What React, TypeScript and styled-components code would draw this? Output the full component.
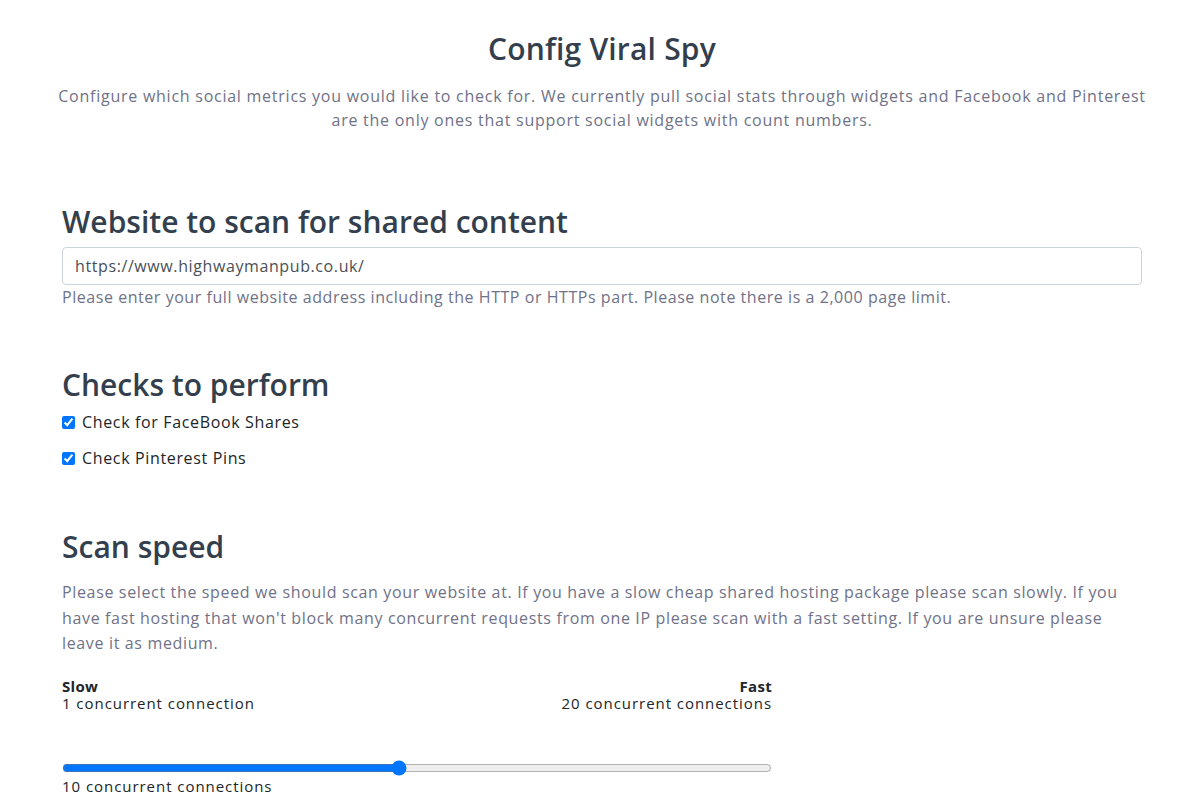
import React, { useState } from 'react';
import styled, { createGlobalStyle } from 'styled-components';

const GlobalStyle = createGlobalStyle`
  body {
    margin: 0;
    background: #ffffff;
    font-family: "Open Sans", "Liberation Sans", sans-serif;
    color: #212529;
  }
`;

const Page = styled.div`
  padding: 32px 47px 0 62px;
`;

const Header = styled.header`
  margin: 0 -15px;
  text-align: center;
`;

const Title = styled.h1`
  margin: 0;
  font-size: 30px;
  line-height: 34px;
  font-weight: 600;
  letter-spacing: 0.2px;
  color: #343f4e;
`;

const Lead = styled.p`
  margin: 18px 0 0;
  font-size: 16px;
  line-height: 24px;
  letter-spacing: 0.75px;
  color: #6f7288;
`;

const Section = styled.section<{ $gap: number }>`
  margin-top: ${(p) => p.$gap}px;
`;

const Heading = styled.h2`
  margin: 0;
  font-size: 30px;
  line-height: 36px;
  font-weight: 600;
  color: #343f4e;
`;

const UrlInput = styled.input`
  display: block;
  box-sizing: border-box;
  width: 100%;
  height: 38px;
  margin-top: 7px;
  padding: 0 12px;
  border: 1px solid #ced4da;
  border-radius: 4px;
  font-family: inherit;
  font-size: 16px;
  letter-spacing: 0.6px;
  color: #495057;
  outline: none;
`;

const Help = styled.p`
  margin: 0;
  font-size: 16px;
  line-height: 24px;
  letter-spacing: 0.55px;
  color: #6f7288;
`;

const CheckList = styled.div`
  display: flex;
  flex-direction: column;
  gap: 12px;
  margin-top: 7px;
`;

const CheckRow = styled.label`
  display: flex;
  align-items: center;
  gap: 7px;
  height: 24px;
  font-size: 16px;
  letter-spacing: 0.65px;
  color: #212529;
`;

const CheckBox = styled.input`
  width: 13px;
  height: 13px;
  margin: 0;
`;

const Para = styled.p`
  margin: 15px 0 0;
  font-size: 16px;
  line-height: 25.5px;
  letter-spacing: 0.65px;
  color: #6f7288;
`;

const Speed = styled.div`
  width: 710px;
  margin-top: 21px;
`;

const Ends = styled.div`
  display: flex;
  justify-content: space-between;
  font-size: 15px;
  line-height: 17px;
  letter-spacing: 0.95px;
  color: #212529;
`;

const End = styled.div<{ $right?: boolean }>`
  text-align: ${(p) => (p.$right ? 'right' : 'left')};

  strong {
    display: block;
    font-weight: 700;
    letter-spacing: 0.3px;
  }
`;

const Range = styled.input`
  display: block;
  width: 710px;
  height: 16px;
  margin: 48px 0 0;
`;

const Current = styled.div`
  margin-top: 2px;
  font-size: 15px;
  line-height: 16px;
  letter-spacing: 0.95px;
  color: #212529;
`;

export default function App() {
  const [url, setUrl] = useState('https://www.highwaymanpub.co.uk/');
  const [fb, setFb] = useState(true);
  const [pins, setPins] = useState(true);
  const [speed, setSpeed] = useState(10);

  return (
    <Page>
      <GlobalStyle />
      <Header>
        <Title>Config Viral Spy</Title>
        <Lead>
          Configure which social metrics you would like to check for. We currently pull social stats through widgets and
          Facebook and Pinterest are the only ones that support social widgets with count numbers.
        </Lead>
      </Header>

      <Section $gap={72}>
        <Heading>Website to scan for shared content</Heading>
        <UrlInput value={url} onChange={(e) => setUrl(e.target.value)} />
        <Help>
          Please enter your full website address including the HTTP or HTTPs part. Please note there is a 2,000 page limit.
        </Help>
      </Section>

      <Section $gap={58}>
        <Heading>Checks to perform</Heading>
        <CheckList>
          <CheckRow>
            <CheckBox type="checkbox" checked={fb} onChange={() => setFb(!fb)} />
            Check for FaceBook Shares
          </CheckRow>
          <CheckRow>
            <CheckBox type="checkbox" checked={pins} onChange={() => setPins(!pins)} />
            Check Pinterest Pins
          </CheckRow>
        </CheckList>
      </Section>

      <Section $gap={59}>
        <Heading>Scan speed</Heading>
        <Para>
          Please select the speed we should scan your website at. If you have a slow cheap shared hosting package please
          scan slowly. If you have fast hosting that won't block many concurrent requests from one IP please scan with a
          fast setting. If you are unsure please leave it as medium.
        </Para>
        <Speed>
          <Ends>
            <End>
              <strong>Slow</strong>1 concurrent connection
            </End>
            <End $right>
              <strong>Fast</strong>20 concurrent connections
            </End>
          </Ends>
          <Range type="range" min={1} max={20} value={speed} onChange={(e) => setSpeed(Number(e.target.value))} />
          <Current>{speed} concurrent connections</Current>
        </Speed>
      </Section>
    </Page>
  );
}
